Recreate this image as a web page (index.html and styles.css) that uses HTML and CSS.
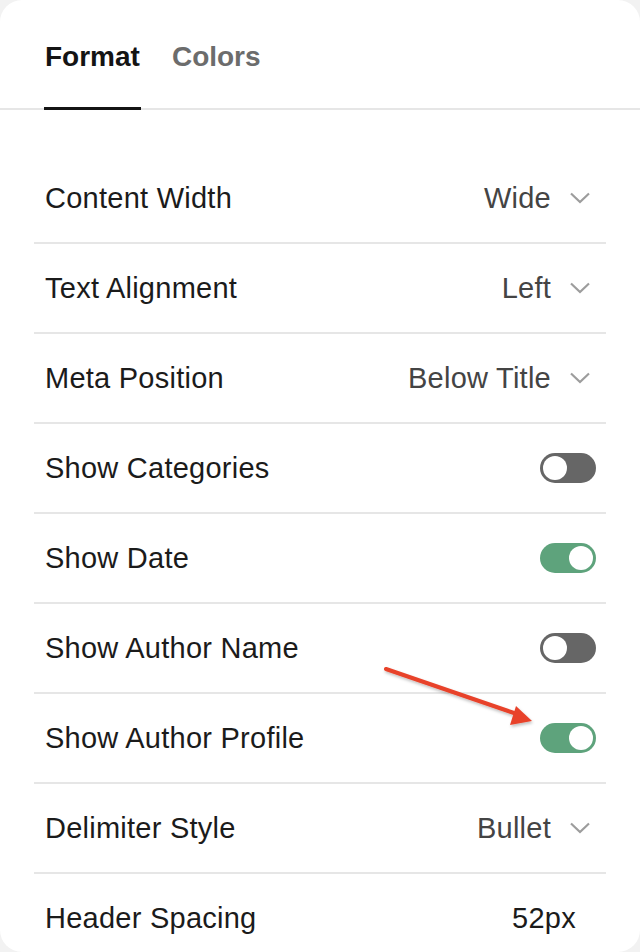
FILE: index.html
```html
<!DOCTYPE html>
<html lang="en">
  <head>
    <meta charset="UTF-8" />
    <title>Blog Settings</title>
    <link rel="stylesheet" href="styles.css">
  </head>
  <body>
    <div class="panel">
      <div class="tabs">
        <div class="tab active">Format</div>
        <div class="tab">Colors</div>
      </div>

      <div class="list">
        <div class="row">
          <span class="label">Content Width</span>
          <span class="select">Wide
            <svg class="chevron" viewBox="0 0 20 12"><path d="M1 1.5 L10 10 L19 1.5" /></svg>
          </span>
        </div>
        <div class="row">
          <span class="label">Text Alignment</span>
          <span class="select">Left
            <svg class="chevron" viewBox="0 0 20 12"><path d="M1 1.5 L10 10 L19 1.5" /></svg>
          </span>
        </div>
        <div class="row">
          <span class="label">Meta Position</span>
          <span class="select">Below Title
            <svg class="chevron" viewBox="0 0 20 12"><path d="M1 1.5 L10 10 L19 1.5" /></svg>
          </span>
        </div>
        <div class="row">
          <span class="label">Show Categories</span>
          <span class="toggle"></span>
        </div>
        <div class="row">
          <span class="label">Show Date</span>
          <span class="toggle on"></span>
        </div>
        <div class="row">
          <span class="label">Show Author Name</span>
          <span class="toggle"></span>
        </div>
        <div class="row">
          <span class="label">Show Author Profile</span>
          <span class="toggle on"></span>
        </div>
        <div class="row">
          <span class="label">Delimiter Style</span>
          <span class="select">Bullet
            <svg class="chevron" viewBox="0 0 20 12"><path d="M1 1.5 L10 10 L19 1.5" /></svg>
          </span>
        </div>
        <div class="row">
          <span class="label">Header Spacing</span>
          <span class="number">52px</span>
        </div>
      </div>

      <svg class="arrow" width="640" height="952" viewBox="0 0 640 952">
        <defs>
          <filter id="shadow" x="-20%" y="-20%" width="140%" height="140%">
            <feDropShadow dx="1" dy="2" stdDeviation="1.5" flood-color="#000" flood-opacity="0.25" />
          </filter>
        </defs>
        <g filter="url(#shadow)">
          <line x1="386" y1="669" x2="514" y2="713" stroke="#e8432a" stroke-width="4" stroke-linecap="round" />
          <polygon points="532,721 510,725 516,706" fill="#e8432a" />
        </g>
      </svg>
    </div>
  </body>
</html>
```

FILE: styles.css
```css
body {
  margin: 0;
  background: #f2f2f2;
  font-family: "Liberation Sans", Arial, sans-serif;
  color: #1b1b1b;
}
.panel {
  position: relative;
  height: 952px;
  background: #fff;
  border-radius: 22px;
  overflow: hidden;
}
.tabs {
  display: flex;
  gap: 30px;
  padding: 0 44px;
  height: 108px;
  border-bottom: 2px solid #e6e6e6;
}
.tab {
  display: flex;
  align-items: center;
  padding: 6px 1px 0;
  font-size: 28px;
  font-weight: 700;
  color: #6c6c6c;
  margin-bottom: -2px;
  border-bottom: 3px solid transparent;
  box-sizing: border-box;
  height: 110px;
}
.tab.active {
  color: #141414;
  border-bottom-color: #141414;
}
.list {
  margin: 44px 34px 0;
}
.row {
  display: flex;
  align-items: center;
  justify-content: space-between;
  height: 90px;
  padding: 0 16px 0 11px;
  border-bottom: 2px solid #e6e6e6;
  box-sizing: border-box;
  font-size: 29px;
  letter-spacing: 0.25px;
}
.label {
  color: #1b1b1b;
}
.select {
  display: flex;
  align-items: center;
  gap: 19px;
  color: #444;
}
.chevron {
  width: 20px;
  height: 12px;
  fill: none;
  stroke: #9d9d9d;
  stroke-width: 2.2;
}
.number {
  margin-right: 14px;
  color: #1b1b1b;
}
.toggle {
  position: relative;
  width: 56px;
  height: 30px;
  margin-right: -6px;
  border-radius: 15px;
  background: #666;
}
.toggle::after {
  content: "";
  position: absolute;
  top: 3px;
  left: 3px;
  width: 24px;
  height: 24px;
  border-radius: 50%;
  background: #fff;
}
.toggle.on {
  background: #5ea37c;
}
.toggle.on::after {
  left: 29px;
}
.arrow {
  position: absolute;
  top: 0;
  left: 0;
  pointer-events: none;
}
```
